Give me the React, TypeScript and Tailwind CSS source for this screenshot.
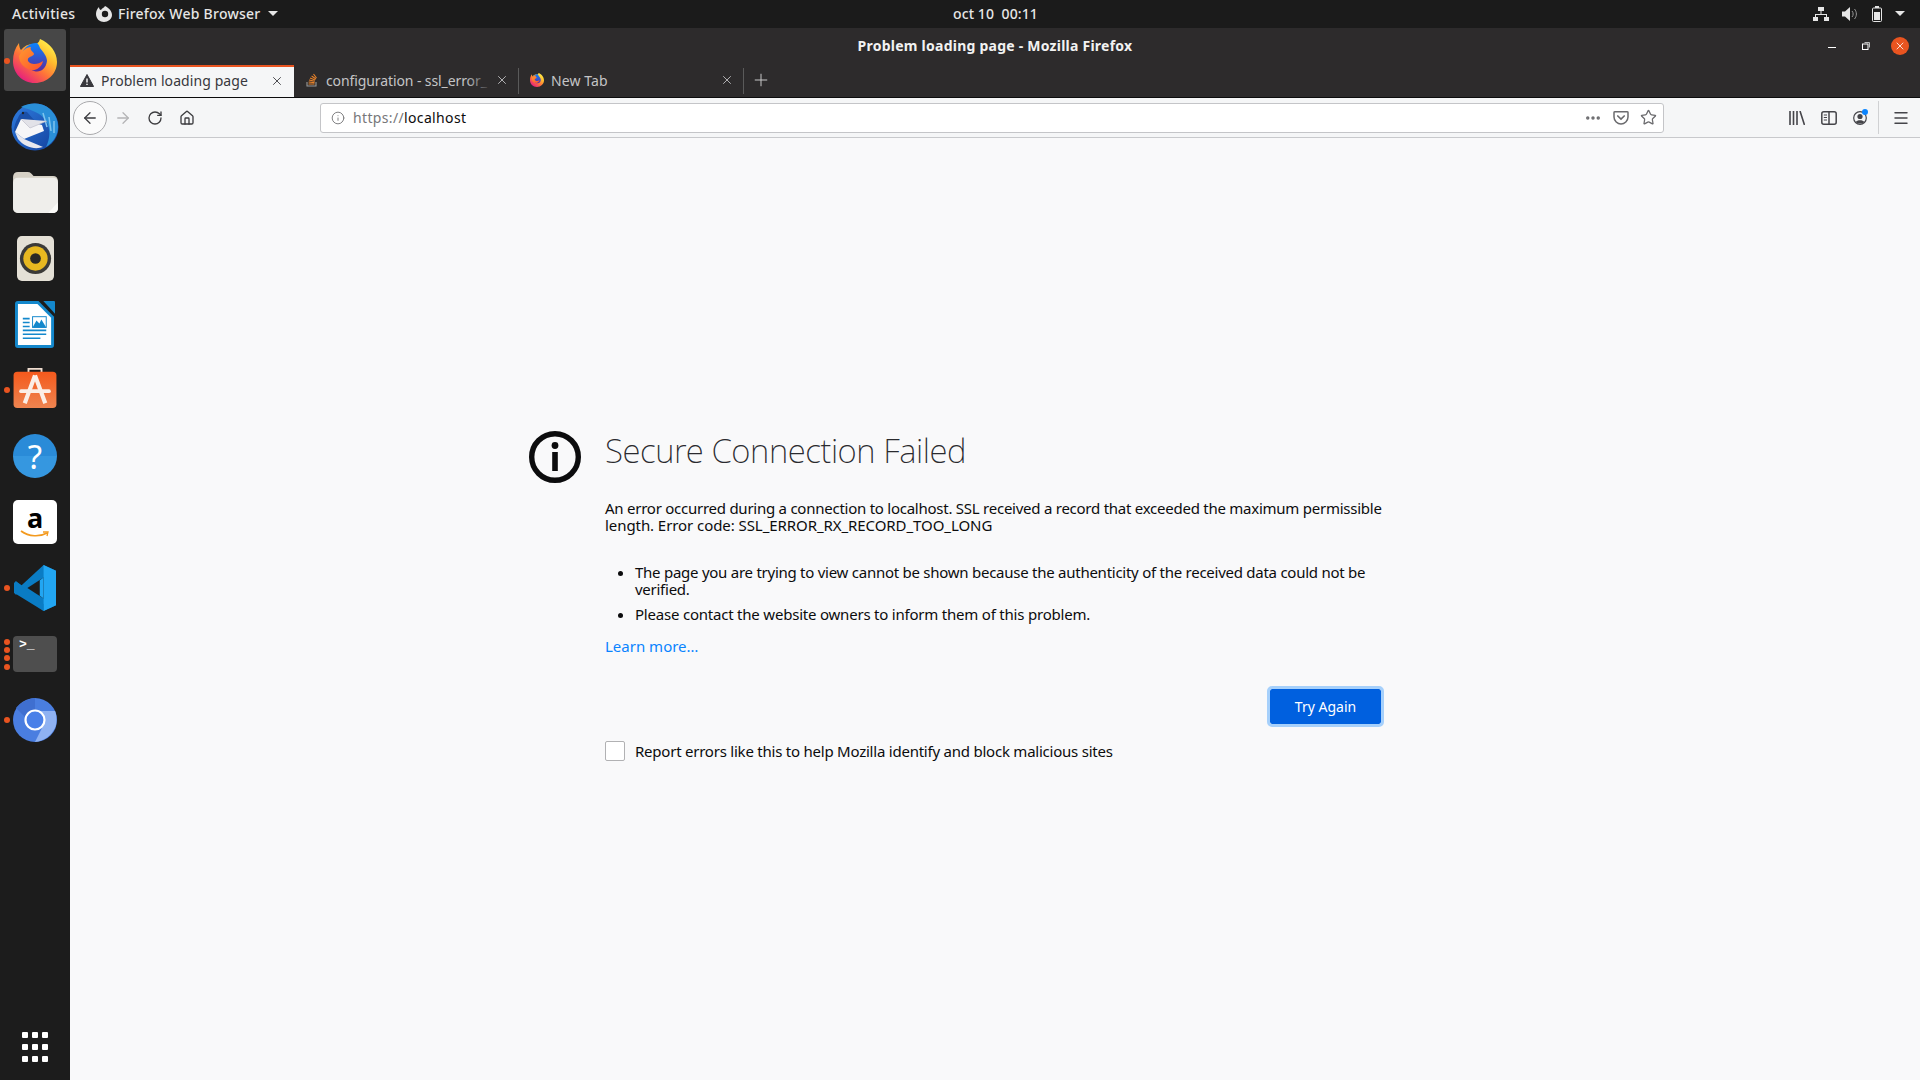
import React from 'react';
import { X, Plus, ArrowLeft, ArrowRight, RotateCw, Home, Info, Star, Ellipsis, Menu } from 'lucide-react';

const FirefoxLogo: React.FC<{ size: number }> = ({ size }) => (
  <svg width={size} height={size} viewBox="0 0 44 44">
    <defs>
      <linearGradient id="ffBody" x1="0.85" y1="0.05" x2="0.15" y2="0.95">
        <stop offset="0" stopColor="#fff44f" />
        <stop offset="0.3" stopColor="#ffbd2e" />
        <stop offset="0.6" stopColor="#ff7139" />
        <stop offset="1" stopColor="#e31587" />
      </linearGradient>
      <linearGradient id="ffGlobe" x1="0.5" y1="0" x2="0.5" y2="1">
        <stop offset="0" stopColor="#0a84ff" />
        <stop offset="1" stopColor="#5b2a9d" />
      </linearGradient>
      <linearGradient id="ffFox" x1="0" y1="0" x2="1" y2="1">
        <stop offset="0" stopColor="#ff9a2e" />
        <stop offset="1" stopColor="#ff4f2e" />
      </linearGradient>
    </defs>
    <path d="M27 0C37 4 44 13 44 23C44 35 34 44 22 44C9 44 0 34 0 22C0 15 2 9 6 4C6 7 7 10 8 11C11 7 15 5 20 5C24 5 26 4 27 0Z" fill="url(#ffBody)" />
    <path d="M9 15C11 8 17 4 23 4C25 4 26 6 27 9C30 13 34 17 34 22C33 30 27 34 21 32C17 31 14 27 15 24L9 15Z" fill="url(#ffGlobe)" />
    <path d="M6 17C9 12 13 8 18 8C16 11 21 13 21 15C21 17 15 18 15 20C14 22 17 25 21 25C25 25 27 24 30 22C29 28 23 32 18 31C10 29 6 23 6 17Z" fill="url(#ffFox)" />
  </svg>
);

const Thunderbird: React.FC = () => (
  <svg width="50" height="50" viewBox="0 0 50 50">
    <defs>
      <linearGradient id="tbBlue" x1="0" y1="0" x2="1" y2="1">
        <stop offset="0" stopColor="#2f7de0" />
        <stop offset="1" stopColor="#123f9b" />
      </linearGradient>
    </defs>
    <circle cx="25" cy="26" r="23.5" fill="url(#tbBlue)" />
    <path d="M11 6C19 1 32 1 40 8C45 13 48 19 48 26C48 34 43 42 36 46C40 38 41 28 36 20C31 12 22 9 11 6Z" fill="#2a8fd8" />
    <path d="M33 12L37 26M39 16L41 30M44 20L44 32" stroke="#7fc4ee" strokeWidth="1.5" />
    <path d="M8 17C10 11 15 10 17 11L32 28L14 37L4 30C4 25 6 20 8 17Z" fill="#1a4fa8" />
    <path d="M11 18L32 24L34 30L14 38L5 31Z" fill="#f6f6f8" />
    <path d="M5 31L14 38L33 46C25 49 14 46 8 38Z" fill="#e8e8ee" />
    <path d="M11 18L20 27L37 20" fill="#e2e2e8" stroke="#b7b7c4" strokeWidth="0.6" />
    <circle cx="13" cy="12" r="1.2" fill="#20242c" />
  </svg>
);

const Files: React.FC = () => (
  <svg width="45" height="41" viewBox="0 0 46 42">
    <path d="M0 5C0 2 2 0 5 0H15C18 0 19 2 21 4H41C44 4 46 6 46 9V37C46 40 44 42 41 42H5C2 42 0 40 0 37Z" fill="#d5d0c5" />
    <path d="M0 11C0 8 2 6 5 6H41C44 6 46 8 46 11V37C46 40 44 42 41 42H5C2 42 0 40 0 37Z" fill="#efeeeb" />
    <path d="M36 42L46 31V37C46 40 44 42 41 42Z" fill="#fafaf8" />
  </svg>
);

const Rhythmbox: React.FC = () => (
  <svg width="37" height="45" viewBox="0 0 38 46">
    <rect width="38" height="46" rx="5" fill="#e4e0d6" />
    <circle cx="19" cy="23" r="16" fill="#3b3a38" />
    <circle cx="19" cy="23" r="12.5" fill="#e8b820" />
    <circle cx="19" cy="23" r="5.5" fill="#2a2926" />
  </svg>
);

const Writer: React.FC = () => (
  <svg width="41" height="47" viewBox="0 0 42 48">
    <path d="M0 3C0 1 1 0 3 0H24L40 16V45C40 47 39 48 37 48H3C1 48 0 47 0 45Z" fill="#1488cc" />
    <path d="M3 3H23L37 17V45H3Z" fill="#ffffff" />
    <path d="M29 0H40C41 0 41 1 41 2V13Z" fill="#1488cc" />
    <path d="M8 18H15M8 22H15M8 26H15M8 30H32M8 34H32M8 38H26" stroke="#1488cc" strokeWidth="1.6" />
    <rect x="18" y="16" width="14" height="11" fill="#ffffff" stroke="#1488cc" strokeWidth="1" />
    <path d="M18 27L22 20L25 23L27 19L32 27Z" fill="#1488cc" />
  </svg>
);

const Software: React.FC = () => (
  <svg width="44" height="41" viewBox="0 0 46 44" className="mt-[-5px]">
    <defs>
      <linearGradient id="swBg" x1="0" y1="0" x2="0" y2="1">
        <stop offset="0" stopColor="#f4591c" />
        <stop offset="1" stopColor="#ee8450" />
      </linearGradient>
    </defs>
    <path d="M16 6V2H30V6" fill="none" stroke="#f0ddd0" strokeWidth="2" />
    <rect y="5" width="46" height="39" rx="4" fill="url(#swBg)" />
    <path d="M23 9L12 39M23 9L34 39" stroke="#fbeee6" strokeWidth="4.5" />
    <path d="M8 26H38" stroke="#fbeee6" strokeWidth="4" strokeLinecap="round" />
  </svg>
);

const Help: React.FC = () => (
  <div className="flex h-[44px] w-[44px] items-center justify-center rounded-full bg-linear-to-b from-[#2a8bd8] from-50% to-[#3597e0] to-50% text-[33px] font-normal leading-none text-white">?</div>
);

const Amazon: React.FC = () => (
  <div className="flex h-[44px] w-[44px] flex-col items-center rounded-[5px] bg-white pt-[7px]">
    <span className="text-[27px] font-bold leading-[22px] text-black">a</span>
    <svg width="30" height="8" viewBox="0 0 30 8" className="mt-[1px]">
      <path d="M1 1C9 7 20 7 27 3" fill="none" stroke="#f39a1e" strokeWidth="1.6" />
      <path d="M23 2L28 2L27 6" fill="none" stroke="#f39a1e" strokeWidth="1.3" />
    </svg>
  </div>
);

const VSCode: React.FC = () => (
  <svg width="42" height="48" viewBox="0 0 44 48">
    <path d="M31 0L44 6V42L31 48L8 27L2 31L0 29V19L2 17L8 21Z" fill="#0a7cc4" />
    <path d="M31 0L44 6V42L31 48Z" fill="#22a6f2" />
    <path d="M31 13V35L14 24Z" fill="#1c1c1c" />
    <path d="M0 19L2 17L31 41V48L0 29Z" fill="#0a7cc4" />
    <path d="M31 13L31 35L27 32L27 16Z" fill="#22a6f2" />
  </svg>
);

const Terminal: React.FC = () => (
  <div className="h-[36px] w-[44px] rounded-[4px] bg-[#4e4e4e] pl-[6px] font-mono text-[13px] font-bold leading-[18px] text-white">&gt;_</div>
);

const Chromium: React.FC = () => (
  <svg width="44" height="44" viewBox="0 0 44 44">
    <circle cx="22" cy="22" r="22" fill="#4a7ee0" />
    <path d="M22 13H42C44 17 44 26 42 30C38 38 31 43 22 44L30 28Z" fill="#8fb2f2" />
    <path d="M3 10C6 6 13 1 22 0V13C17 13 14 17 13 20Z" fill="#3f6fd0" />
    <circle cx="22" cy="22" r="9.5" fill="#4a80e8" stroke="#ffffff" strokeWidth="2.2" />
  </svg>
);

// running-app dots sit over the left edge of the dock
const dockApps: { icon: React.ReactNode; dots: number[]; active?: boolean }[] = [
  { icon: <FirefoxLogo size={44} />, dots: [0], active: true },
  { icon: <Thunderbird />, dots: [] },
  { icon: <Files />, dots: [] },
  { icon: <Rhythmbox />, dots: [] },
  { icon: <Writer />, dots: [] },
  { icon: <Software />, dots: [0] },
  { icon: <Help />, dots: [] },
  { icon: <Amazon />, dots: [] },
  { icon: <VSCode />, dots: [0] },
  { icon: <Terminal />, dots: [-12, -4, 4, 13] },
  { icon: <Chromium />, dots: [0] },
];

const Dock: React.FC = () => (
  <aside className="flex w-[70px] shrink-0 flex-col bg-[#1c1c1c]">
    {dockApps.map((app, i) => (
      <div key={i} className={`relative flex items-center justify-center ${i === 0 ? 'h-[65px]' : 'h-[66px]'}`}>
        {app.active && <div className="absolute inset-x-[4px] bottom-[2px] top-[1px] rounded-[3px] bg-[#474747]" />}
        {app.dots.map((d) => (
          <span
            key={d}
            className="absolute left-[4px] top-1/2 h-[6px] w-[6px] -translate-y-1/2 rounded-full bg-[#e95420]"
            style={{ marginTop: d }}
          />
        ))}
        <div className="relative">{app.icon}</div>
      </div>
    ))}
    <div className="mt-auto mb-[18px] grid grid-cols-3 justify-items-center gap-y-[6px] self-center" style={{ width: 30 }}>
      {Array.from({ length: 9 }).map((_, i) => (
        <span key={i} className="h-[6px] w-[6px] rounded-[1px] bg-white" />
      ))}
    </div>
  </aside>
);

const TopBar: React.FC = () => (
  <header className="flex h-[28px] items-center bg-[#1b1b1b] pb-[1px] text-[14px] font-medium text-[#e6e6e6]">
    <span className="ml-[12px] w-[85px] tracking-[0.3px]">Activities</span>
    <svg width="16" height="16" viewBox="0 0 16 16" className="ml-[-1px]">
      <path d="M9 0C13 2 16 5 16 9C16 13 12 16 8 16C4 16 0 13 0 8C0 5 1 3 3 1C3 3 4 4 5 4C6 2 8 2 9 0Z" fill="#e6e6e6" />
      <circle cx="9" cy="8" r="3.2" fill="#1b1b1b" />
    </svg>
    <span className="ml-[6px] tracking-[0.25px]">Firefox Web Browser</span>
    <span className="ml-[7px] h-0 w-0 border-x-[5px] border-t-[5px] border-x-transparent border-t-[#e6e6e6]" />
    <span className="absolute left-[953px] tracking-[0.1px]">oct 10&nbsp; 00:11</span>
    <div className="ml-auto mr-[15px] flex items-center">
      <svg width="16" height="14" viewBox="0 0 16 14" fill="#e6e6e6">
        <rect x="5" y="0" width="6" height="4" />
        <rect x="0" y="10" width="5" height="4" />
        <rect x="11" y="10" width="5" height="4" />
        <path d="M7.5 4H8.5V7H14V10H13V8H3V10H2V7H7.5Z" />
      </svg>
      <svg width="16" height="14" viewBox="0 0 16 14" className="ml-[13px]">
        <path d="M0 4.5H3L8 0V14L3 9.5H0Z" fill="#e6e6e6" />
        <path d="M10 4C11.5 5.5 11.5 8.5 10 10M12.5 2C15 5 15 9 12.5 12" fill="none" stroke="#999" strokeWidth="1" />
      </svg>
      <svg width="11" height="16" viewBox="0 0 11 16" className="ml-[14px]">
        <rect x="0.5" y="2" width="9" height="13.5" rx="1" fill="none" stroke="#e6e6e6" />
        <rect x="3" y="0" width="4" height="2" fill="#e6e6e6" />
        <rect x="2" y="6" width="6" height="8" fill="#e6e6e6" />
      </svg>
      <span className="ml-[12px] h-0 w-0 border-x-[5px] border-t-[5px] border-x-transparent border-t-[#e6e6e6]" />
    </div>
  </header>
);

const TitleBar: React.FC = () => (
  <div className="relative flex h-[37px] items-center justify-center bg-[#2d2b2c] pb-[2px]">
    <span className="text-[14px] font-bold tracking-[0.24px] text-[#f2f2f2]">Problem loading page - Mozilla Firefox</span>
    <div className="absolute right-[11px] flex items-center">
      <span className="mt-[4px] h-[1px] w-[8px] bg-white" />
      <svg width="8" height="8" viewBox="0 0 8 8" className="ml-[26px]">
        <rect x="0.5" y="2" width="5.5" height="5.5" fill="none" stroke="#fff" />
        <path d="M2.5 0.5H7.5V5.5" fill="none" stroke="#bbb" />
      </svg>
      <span className="ml-[21px] flex h-[18px] w-[18px] items-center justify-center rounded-full bg-[#e95420]">
        <X size={12} strokeWidth={1.6} color="#fff" />
      </span>
    </div>
  </div>
);

const TabBar: React.FC = () => (
  <div className="flex h-[32px] bg-[#2d2b2c] text-[14px]">
    <div className="flex w-[224px] items-center border-t-2 border-[#e95420] bg-[#f5f6f7] pb-[3px] pl-[10px] pr-[10px] text-[#38383d]">
      <svg width="14" height="13" viewBox="0 0 14 13">
        <path d="M7 0.5L13.6 12.5H0.4Z" fill="#38383d" stroke="#38383d" strokeLinejoin="round" />
        <path d="M7 4.5V8.5M7 9.7V11" stroke="#fff" strokeWidth="1.4" />
      </svg>
      <span className="ml-[7px] tracking-[0.08px]">Problem loading page</span>
      <X size={14} strokeWidth={1.5} className="ml-auto" color="#38383d" />
    </div>
    <div className="relative flex w-[225px] items-center border-r pb-[2px] pl-[12px] pr-[9px] text-[#c4c4c6] [border-image:linear-gradient(transparent_12%,#5a5a5a_12%,#5a5a5a_88%,transparent_88%)_1]">
      <svg width="12" height="14" viewBox="0 0 12 14" fill="none">
        <path d="M1 9V13H10V9" stroke="#9a9a9a" strokeWidth="1.1" />
        <path d="M2.5 11H8.5M2.6 9L8.5 9.6M3 7L8.8 8.2M4 5L9.2 7M5.6 3L10 6M7.5 1L10.5 5" stroke="#e8822a" strokeWidth="1.1" />
      </svg>
      <span className="ml-[8px] whitespace-nowrap tracking-[-0.1px]">configuration - ssl_error_</span>
      <span className="absolute left-[172px] h-[20px] w-[26px] bg-linear-to-r from-transparent to-[#2d2b2c]" />
      <X size={14} strokeWidth={1.5} className="ml-auto" color="#c4c4c6" />
    </div>
    <div className="flex w-[225px] items-center border-r pb-[2px] pl-[11px] pr-[9px] text-[#c4c4c6] [border-image:linear-gradient(transparent_12%,#5a5a5a_12%,#5a5a5a_88%,transparent_88%)_1]">
      <FirefoxLogo size={14} />
      <span className="ml-[7px] tracking-[0.08px]">New Tab</span>
      <X size={14} strokeWidth={1.5} className="ml-auto" color="#c4c4c6" />
    </div>
    <div className="ml-[7px] flex items-center pb-[2px]">
      <Plus size={20} strokeWidth={1.2} color="#c8c8c8" />
    </div>
  </div>
);

const NavBar: React.FC = () => (
  <div className="flex h-[41px] items-center border-t border-b border-t-[#0c0c0d] border-b-[#c8c9cc] bg-[#f5f6f7] text-[#3d3d40]">
    <button className="ml-[3px] flex h-[34px] w-[34px] items-center justify-center rounded-full border border-[#a9a9ac] bg-[#fbfbfb]">
      <ArrowLeft size={18} strokeWidth={1.7} />
    </button>
    <ArrowRight size={18} strokeWidth={1.7} className="ml-[7px] text-[#b4b4b6]" />
    <RotateCw size={16} strokeWidth={2} className="ml-[15px]" />
    <Home size={16} strokeWidth={2} className="ml-[16px]" />
    <div className="ml-[125px] flex h-[30px] w-[1344px] items-center rounded-[3px] border border-[#c4c5c8] bg-white pl-[10px] pr-[6px]">
      <Info size={14} strokeWidth={1.6} className="text-[#77777a]" />
      <span className="ml-[8px] text-[14px] tracking-[0.35px] text-[#77777a]">
        https://<span className="text-[#0c0c0d]">localhost</span>
      </span>
      <Ellipsis size={18} strokeWidth={2.6} className="ml-auto text-[#6b6b6e]" />
      <svg width="16" height="14" viewBox="0 0 16 14" fill="none" className="ml-[11px]">
        <path d="M1 1.5C1 1 1.4 .8 2 .8H14C14.6 .8 15 1 15 1.5V6C15 10 11.5 13 8 13C4.5 13 1 10 1 6Z" stroke="#6b6b6e" strokeWidth="1.5" />
        <path d="M4.8 5L8 8L11.2 5" stroke="#6b6b6e" strokeWidth="1.7" strokeLinecap="round" />
      </svg>
      <Star size={17} strokeWidth={1.8} className="ml-[11px] text-[#6b6b6e]" />
    </div>
    <div className="ml-[125px] flex h-[34px] items-center">
      <svg width="16" height="14" viewBox="0 0 16 14" fill="none" stroke="#45454a" strokeWidth="1.6">
        <path d="M1 0V14M4.5 0V14M8 0V14M11 0L15.5 14" />
      </svg>
      <svg width="16" height="14" viewBox="0 0 16 14" fill="none" className="ml-[16px]">
        <rect x="0.8" y="0.8" width="14.4" height="12.4" rx="2" stroke="#45454a" strokeWidth="1.5" />
        <path d="M8 1V13" stroke="#45454a" strokeWidth="1.5" />
        <path d="M2.8 4H6M2.8 6.5H6M2.8 9H6" stroke="#45454a" />
      </svg>
      <div className="relative ml-[16px] h-[14px] w-[14px]">
        <svg width="14" height="14" viewBox="0 0 14 14" fill="none">
          <circle cx="7" cy="7" r="6.3" stroke="#45454a" strokeWidth="1.2" />
          <circle cx="7" cy="5.5" r="2.6" fill="#45454a" />
          <path d="M2.8 11C4 8.5 10 8.5 11.2 11C9.5 13 4.5 13 2.8 11Z" fill="#45454a" />
        </svg>
        <span className="absolute -right-[1px] -top-[2px] h-[6px] w-[6px] rounded-full bg-[#0a84ff]" />
      </div>
      <span className="ml-[11px] h-[33px] w-[1px] bg-[#d0d1d3]" />
      <Menu size={18} strokeWidth={1.9} className="ml-[13px] text-[#45454a]" />
    </div>
  </div>
);

const ErrorPage: React.FC = () => (
  <main className="flex flex-1 bg-[#f9f9fa] pl-[459px] pt-[294px] text-[#0c0c0d]">
    <svg width="52" height="52" viewBox="0 0 52 52" className="mt-[-1px] shrink-0">
      <circle cx="26" cy="26" r="23.3" fill="none" stroke="#0c0c0d" strokeWidth="5.4" />
      <circle cx="26" cy="14.5" r="3.4" fill="#0c0c0d" />
      <rect x="23.2" y="21" width="5.6" height="19" fill="#0c0c0d" />
    </svg>
    <div className="ml-[24px] w-[778px]">
      <h1 className="mt-[-3px] h-[44px] text-[33px] font-extralight leading-[44px] tracking-[-0.42px] text-[#2a2a2e]">Secure Connection Failed</h1>
      <p className="mt-[27px] whitespace-nowrap text-[15px] leading-[17px] tracking-[-0.25px]">
        An error occurred during a connection to localhost. SSL received a record that exceeded the maximum permissible
        <br />
        <span className="tracking-[-0.07px]">length. Error code: SSL_ERROR_RX_RECORD_TOO_LONG</span>
      </p>
      <ul className="mt-[30px] list-disc whitespace-nowrap pl-[30px] text-[15px] leading-[17px] tracking-[-0.257px]">
        <li>
          The page you are trying to view cannot be shown because the authenticity of the received data could not be
          <br />
          verified.
        </li>
        <li className="mt-[8px] tracking-[-0.21px]">Please contact the website owners to inform them of this problem.</li>
      </ul>
      <a className="mt-[15px] block text-[15px] leading-[17px] text-[#0a84ff]">Learn more…</a>
      <div className="mt-[34px] flex justify-end">
        <button className="mr-[2px] h-[35px] w-[111px] rounded-[2px] bg-[#0060df] text-[14px] text-white outline-[3px] outline-[#a6d0fb]">Try Again</button>
      </div>
      <label className="mt-[16px] flex items-center">
        <span className="h-[20px] w-[20px] rounded-[2px] border border-[#b1b1b3] bg-white" />
        <span className="ml-[10px] text-[15px] tracking-[-0.228px]">Report errors like this to help Mozilla identify and block malicious sites</span>
      </label>
    </div>
  </main>
);

const App: React.FC = () => (
  <div className="flex h-screen w-screen flex-col overflow-hidden font-['Noto_Sans',sans-serif]">
    <TopBar />
    <div className="flex flex-1">
      <Dock />
      <div className="flex flex-1 flex-col">
        <TitleBar />
        <TabBar />
        <NavBar />
        <ErrorPage />
      </div>
    </div>
  </div>
);

export default App;
